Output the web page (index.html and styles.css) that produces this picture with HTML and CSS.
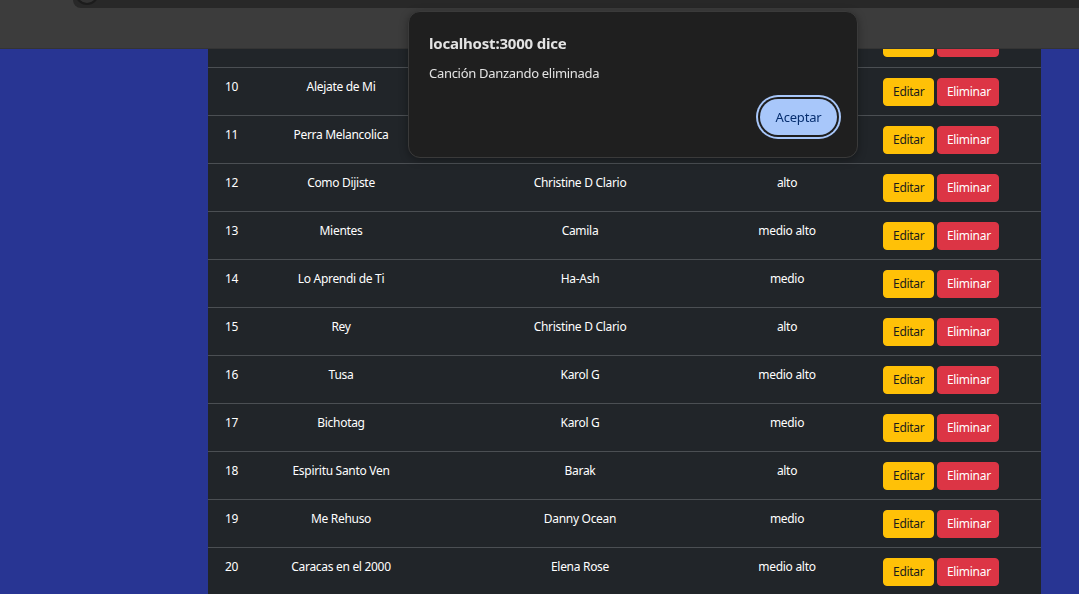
FILE: index.html
```html
<!DOCTYPE html>
<html lang="es">
<head>
<meta charset="utf-8">
<title>Canciones</title>
<link rel="stylesheet" href="styles.css">
</head>
<body>
<div class="chrome">
  <div class="tabstrip"><span class="ring"></span></div>
</div>

<main class="page">
  <table class="songs">
    <colgroup>
      <col class="c-id"><col class="c-name"><col class="c-artist"><col class="c-level"><col class="c-actions">
    </colgroup>
    <tbody>
      <tr><td></td><td></td><td></td><td></td><td><button class="btn edit" aria-label="Editar"></button> <button class="btn del" aria-label="Eliminar"></button></td></tr>
      <tr><td>10</td><td>Alejate de Mi</td><td></td><td></td><td><button class="btn edit">Editar</button> <button class="btn del">Eliminar</button></td></tr>
      <tr><td>11</td><td>Perra Melancolica</td><td></td><td></td><td><button class="btn edit">Editar</button> <button class="btn del">Eliminar</button></td></tr>
      <tr><td>12</td><td>Como Dijiste</td><td>Christine D Clario</td><td>alto</td><td><button class="btn edit">Editar</button> <button class="btn del">Eliminar</button></td></tr>
      <tr><td>13</td><td>Mientes</td><td>Camila</td><td>medio alto</td><td><button class="btn edit">Editar</button> <button class="btn del">Eliminar</button></td></tr>
      <tr><td>14</td><td>Lo Aprendi de Ti</td><td>Ha-Ash</td><td>medio</td><td><button class="btn edit">Editar</button> <button class="btn del">Eliminar</button></td></tr>
      <tr><td>15</td><td>Rey</td><td>Christine D Clario</td><td>alto</td><td><button class="btn edit">Editar</button> <button class="btn del">Eliminar</button></td></tr>
      <tr><td>16</td><td>Tusa</td><td>Karol G</td><td>medio alto</td><td><button class="btn edit">Editar</button> <button class="btn del">Eliminar</button></td></tr>
      <tr><td>17</td><td>Bichotag</td><td>Karol G</td><td>medio</td><td><button class="btn edit">Editar</button> <button class="btn del">Eliminar</button></td></tr>
      <tr><td>18</td><td>Espiritu Santo Ven</td><td>Barak</td><td>alto</td><td><button class="btn edit">Editar</button> <button class="btn del">Eliminar</button></td></tr>
      <tr><td>19</td><td>Me Rehuso</td><td>Danny Ocean</td><td>medio</td><td><button class="btn edit">Editar</button> <button class="btn del">Eliminar</button></td></tr>
      <tr><td>20</td><td>Caracas en el 2000</td><td>Elena Rose</td><td>medio alto</td><td><button class="btn edit">Editar</button> <button class="btn del">Eliminar</button></td></tr>
    </tbody>
  </table>
</main>

<div class="dialog" role="alertdialog">
  <div class="dialog-title">localhost:3000 dice</div>
  <div class="dialog-msg">Canción Danzando eliminada</div>
  <div class="dialog-actions"><button class="accept">Aceptar</button></div>
</div>
</body>
</html>
```
FILE: styles.css
```css
* { box-sizing: border-box; }

html, body {
  margin: 0;
  height: 100%;
  overflow: hidden;
}

body {
  background: #283593;
  font-family: "Noto Sans", "Open Sans", sans-serif;
  color: #fff;
}

.chrome {
  position: fixed;
  top: 0;
  left: 0;
  right: 0;
  height: 49px;
  background: #3c3c3c;
  border-bottom: 1px solid #343434;
  z-index: 5;
}

.tabstrip {
  position: relative;
  margin-left: 73px;
  height: 8px;
  background: #282828;
  border-bottom-left-radius: 8px;
  overflow: hidden;
}

.ring {
  position: absolute;
  left: 2px;
  top: -19px;
  width: 24px;
  height: 24px;
  border-radius: 50%;
  border: 2px solid #1c1c1c;
  background: #333;
}

.page {
  padding: 19px 38px 0 208px;
}

.songs {
  width: 833px;
  table-layout: fixed;
  border-collapse: collapse;
  background: #212529;
  font-size: 12px;
  letter-spacing: -0.3px;
}

.c-id { width: 47px; }
.c-name { width: 172px; }
.c-artist { width: 306px; }
.c-level { width: 108px; }
.c-actions { width: 200px; }

.songs td {
  padding: 10px 0 9px;
  height: 48px;
  line-height: 18px;
  text-align: center;
  vertical-align: top;
  border-bottom: 1px solid #4b4f53;
  white-space: nowrap;
}

.btn {
  font-family: inherit;
  font-size: 12px;
  letter-spacing: -0.3px;
  height: 28px;
  line-height: 26px;
  padding: 0 9px;
  border: 1px solid transparent;
  border-radius: 4px;
  vertical-align: top;
  cursor: pointer;
}

.edit {
  background: #ffc107;
  border-color: #ffc107;
  color: #1b1b1b;
  width: 51px;
}

.del {
  background: #dc3545;
  border-color: #dc3545;
  color: #fff;
  width: 62px;
}

.dialog {
  position: fixed;
  top: 11px;
  left: 408px;
  width: 450px;
  height: 147px;
  background: #1f1f1f;
  border: 1px solid #3a3a3a;
  border-radius: 12px;
  padding: 21px 20px 0 20px;
  color: #e3e3e3;
  z-index: 10;
  box-shadow: 0 2px 8px rgba(0, 0, 0, 0.35);
}

.dialog-title {
  font-size: 15px;
  font-weight: 700;
  line-height: 20px;
  letter-spacing: -0.2px;
}

.dialog-msg {
  margin-top: 11px;
  font-size: 13px;
  line-height: 18px;
  letter-spacing: -0.3px;
}

.dialog-actions {
  display: flex;
  justify-content: flex-end;
  margin-top: 17px;
  padding-right: 0;
}

.accept {
  font-family: inherit;
  font-size: 13px;
  letter-spacing: -0.2px;
  width: 77px;
  height: 36px;
  border: none;
  border-radius: 18px;
  background: #a8c7fa;
  color: #062e6f;
  box-shadow: 0 0 0 2px #1f1f1f, 0 0 0 4px #a8c7fa;
  cursor: pointer;
}
```
